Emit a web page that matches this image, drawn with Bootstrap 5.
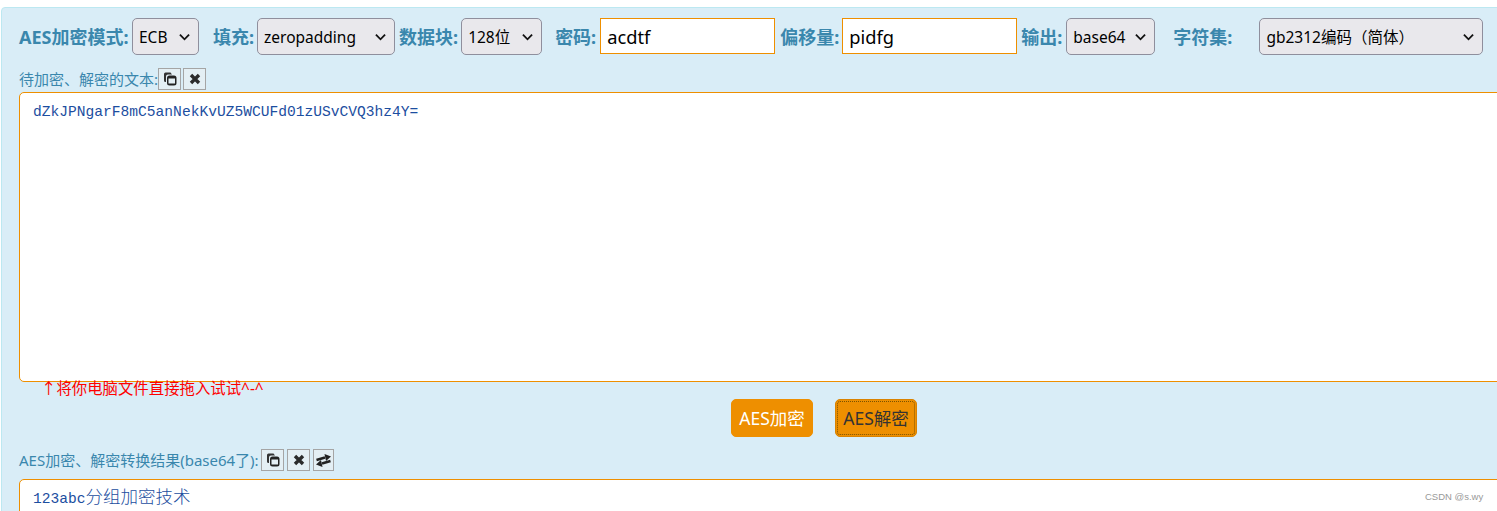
<!DOCTYPE html>
<html lang="zh-CN">

<head>
    <meta charset="UTF-8">
    <meta name="viewport" content="width=device-width, initial-scale=1.0">
    <title>AES加密</title>
    <link href="https://cdn.jsdelivr.net/npm/bootstrap@5.3.3/dist/css/bootstrap.min.css" rel="stylesheet">
    <style>
        html, body { overflow: hidden; height: 511px; }
        body { background: #fff; font-family: "Noto Sans", "Noto Sans CJK SC", sans-serif; color: #000; }
        .aes-panel { width: 1530px; height: 560px; margin: 7px 0 0 1px; padding: 10px 17px; background: #d9edf7; border: 1px solid #bce8f1; border-radius: 4px; color: #3a87ad; }
        .opt-row { height: 37px; }
        .opt-label { font-size: 18px; font-weight: 700; white-space: nowrap; padding-top: 1px; }
        .opt-select { height: 37px; padding: 2px 0 0 6px; font-size: 15.5px; color: #000; background-color: #e9e8ec; background-image: url("data:image/svg+xml,%3csvg xmlns='http://www.w3.org/2000/svg' viewBox='0 0 12 8'%3e%3cpath fill='none' stroke='%23111' stroke-width='2' d='M1 1.500l5 5 5-5'/%3e%3c/svg%3e"); background-position: right 8px center; background-size: 11px 8px; border: 1px solid #8f8f9d; border-radius: 5px; }
        .opt-input { height: 36px; padding: 0 6px; font-size: 18.3px; color: #000; background: #fff; border: 1px solid #ee8f00; outline: 0; width: 175px; align-self: flex-start; }
        .caption { font-size: 15px; height: 22px; line-height: 22px; white-space: nowrap; }
        .tool-btn { width: 23px; height: 22px; display: flex; align-items: center; justify-content: center; padding: 0; background: #e4eff4; border: 1px solid #a5a5a5; }
        .text-box { display: block; width: 1500px; height: 290px; padding: 10px 13px; margin-top: 2px; color: #1c4ea0; background: #fff; border: 1px solid #ee8f00; border-radius: 5px; font-family: "Liberation Mono", monospace; font-size: 14.6px; line-height: 18px; resize: none; outline: 0; }
        .drop-note { height: 16px; line-height: 14px; margin-left: 22px; color: #f00; font-size: 15.4px; white-space: nowrap; }
        .act-row { margin-top: 1px; padding-left: 712px; gap: 22px; }
        .act-btn { width: 82px; height: 38px; padding: 0; font-size: 17.5px; color: #fff; background: #ee8f00; border: 1px solid #ee8f00; border-radius: 5px; }
        .act-btn.is-focus { color: #333; outline: 1px dotted #7a5200; outline-offset: -3px; border-color: #d98200; }
        .result-box { height: 60px; margin-top: 8px; padding: 7px 13px; }
        .cjk-text { font-family: "Noto Sans CJK SC", sans-serif; font-size: 17.5px; font-weight: 300; }
        .watermark { position: absolute; left: 1425px; top: 490px; font-family: "Liberation Sans", sans-serif; font-size: 9.5px; color: #999; }
    </style>
</head>

<body>
    <div class="aes-panel">
        <div class="opt-row d-flex align-items-center">
            <span class="opt-label" style="width:113px">AES加密模式:</span>
            <select class="form-select opt-select" style="width:67px"><option>ECB</option></select>
            <span class="opt-label" style="margin:0 3px 0 14px">填充:</span>
            <select class="form-select opt-select" style="width:138px"><option>zeropadding</option></select>
            <span class="opt-label" style="margin:0 3px 0 4px">数据块:</span>
            <select class="form-select opt-select" style="width:81px"><option>128位</option></select>
            <span class="opt-label" style="margin:0 4px 0 13px">密码:</span>
            <input class="opt-input" type="text" value="acdtf">
            <span class="opt-label" style="margin:0 3px 0 5px">偏移量:</span>
            <input class="opt-input" type="text" value="pidfg">
            <span class="opt-label" style="margin:0 4px">输出:</span>
            <select class="form-select opt-select" style="width:89px"><option>base64</option></select>
            <span class="opt-label" style="margin:0 27px 0 18px">字符集:</span>
            <select class="form-select opt-select" style="width:224px"><option>gb2312编码（简体）</option></select>
        </div>

        <div class="d-flex align-items-center" style="margin-top:13px">
            <span class="caption">待加密、解密的文本:</span>
            <button class="tool-btn" type="button">
                <svg width="14" height="14" viewBox="0 0 14 14"><path d="M1 2A1.500 1.500 0 0 1 2.500 .5h5L9 2.500H5A2 2 0 0 0 3 4.500V10H2.500A1.500 1.500 0 0 1 1 8.500z" fill="#333"/><rect x="4" y="3.500" width="9.500" height="10" rx="2.500" fill="#222"/><rect x="5.500" y="6.500" width="6.500" height="5" fill="#e4eff4"/></svg>
            </button>
            <button class="tool-btn" style="margin-left:2px" type="button">
                <svg width="12" height="12" viewBox="0 0 12 12"><path d="M2 2l8 8M10 2l-8 8" stroke="#2b2b2b" stroke-width="3.400"/></svg>
            </button>
        </div>
        <textarea class="text-box">dZkJPNgarF8mC5anNekKvUZ5WCUFd01zUSvCVQ3hz4Y=</textarea>
        <div class="drop-note">↑将你电脑文件直接拖入试试^-^</div>

        <div class="act-row d-flex">
            <button class="act-btn" type="button">AES加密</button>
            <button class="act-btn is-focus" type="button">AES解密</button>
        </div>

        <div class="d-flex align-items-center" style="margin-top:12px">
            <span class="caption" style="width:242px">AES加密、解密转换结果(base64了):</span>
            <button class="tool-btn" type="button">
                <svg width="14" height="14" viewBox="0 0 14 14"><path d="M1 2A1.500 1.500 0 0 1 2.500 .5h5L9 2.500H5A2 2 0 0 0 3 4.500V10H2.500A1.500 1.500 0 0 1 1 8.500z" fill="#333"/><rect x="4" y="3.500" width="9.500" height="10" rx="2.500" fill="#222"/><rect x="5.500" y="6.500" width="6.500" height="5" fill="#e4eff4"/></svg>
            </button>
            <button class="tool-btn" style="margin-left:3px" type="button">
                <svg width="12" height="12" viewBox="0 0 12 12"><path d="M2 2l8 8M10 2l-8 8" stroke="#2b2b2b" stroke-width="3.400"/></svg>
            </button>
            <button class="tool-btn" style="margin-left:3px;width:21px" type="button">
                <svg width="17" height="13" viewBox="0 0 17 13"><path d="M1.500 6L10 3.500" stroke="#222" stroke-width="2.600" fill="none"/><path d="M9.500 0l6.500 2.500-5 4.500z" fill="#222"/><path d="M15.500 7L7 9.500" stroke="#222" stroke-width="2.600" fill="none"/><path d="M7.500 13L1 10.500 6 6z" fill="#222"/></svg>
            </button>
        </div>
        <div class="text-box result-box"><span>123abc</span><span class="cjk-text">分组加密技术</span></div>
    </div>
    <div class="watermark">CSDN @s.wy</div>
    <script src="https://cdn.jsdelivr.net/npm/bootstrap@5.3.3/dist/js/bootstrap.bundle.min.js"></script>
</body>

</html>
